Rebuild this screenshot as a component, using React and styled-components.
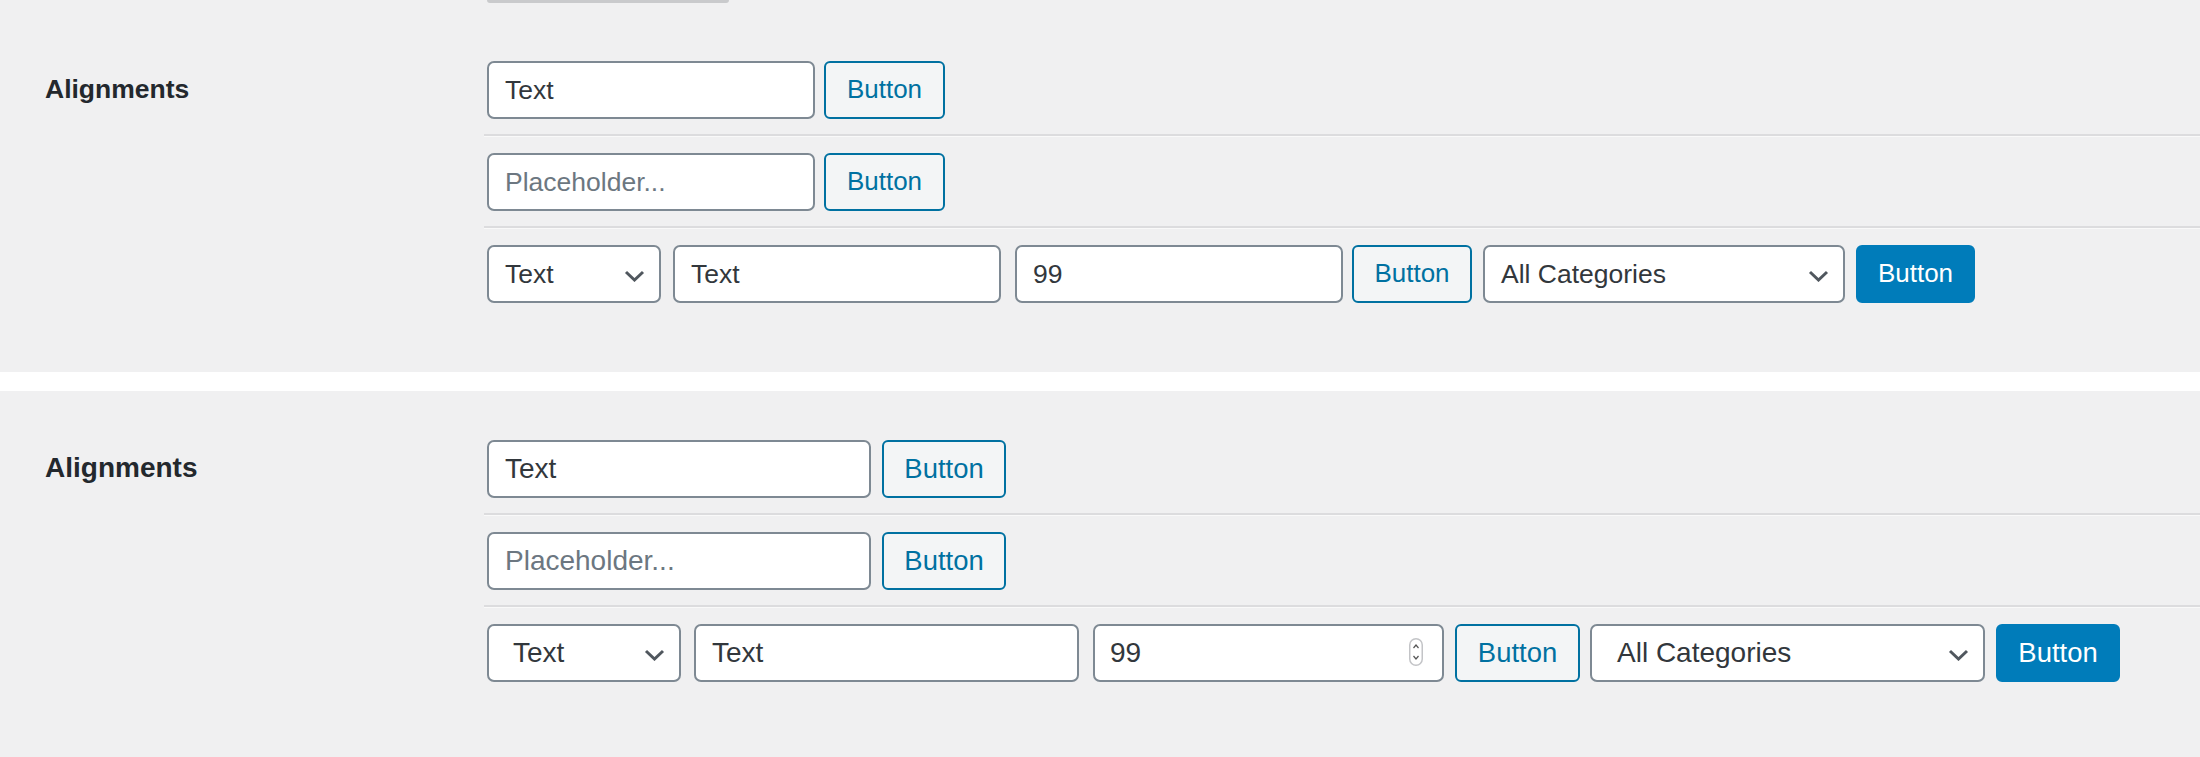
import React from 'react';
import styled, { createGlobalStyle } from 'styled-components';

const Global = createGlobalStyle`
  html, body { margin: 0; padding: 0; background: #fff; }
  body { font-family: "Liberation Sans", Arial, sans-serif; color: #32373c; }
  * { box-sizing: border-box; }
`;

const Page = styled.div`
  display: flex;
  flex-direction: column;
  gap: 19px;
  width: 2200px;
`;

const Section = styled.section`
  display: flex;
  background: #f0f0f1;
  padding: ${(p) => p.$pt}px 0 ${(p) => p.$pb}px;
  font-size: ${(p) => p.$fs}px;
`;

const LabelCol = styled.div`
  flex: none;
  width: 484px;
  padding-left: 45px;
  padding-top: ${(p) => p.$offset}px;
`;

const Label = styled.div`
  height: 58px;
  line-height: 56px;
  font-weight: 700;
  color: #23282d;
  font-size: 1em;
`;

const Content = styled.div`
  flex: 1;
  display: flex;
  flex-direction: column;
`;

const Stub = styled.div`
  width: 242px;
  height: 3px;
  margin-left: 3px;
  margin-bottom: 42px;
  background: #c9cacc;
  border-radius: 0 0 4px 4px;
`;

const Row = styled.div`
  display: flex;
  align-items: center;
  padding: 16px 0 15px;
  & + & {
    border-top: 2px solid #dcdcde;
    padding-top: 17px;
    box-shadow: inset 0 1px 0 #f9f9f9;
  }
`;

const Field = styled.div`
  flex: none;
  display: flex;
  align-items: center;
  justify-content: space-between;
  width: ${(p) => p.$w}px;
  height: 58px;
  margin-left: ${(p) => p.$ml}px;
  padding: 0 ${(p) => p.$pr ?? 14}px 0 ${(p) => p.$pl ?? 16}px;
  border: 2px solid #7e8993;
  border-radius: 7px;
  background: #fff;
  color: #32373c;
`;

const InputEl = styled.input`
  flex: 1;
  min-width: 0;
  border: 0;
  outline: 0;
  padding: 0;
  background: transparent;
  font: inherit;
  color: #32373c;
  &::placeholder {
    color: #6c7781;
    opacity: 1;
  }
`;

const SelectText = styled.span`
  white-space: nowrap;
`;

const Chevron = styled.svg`
  flex: none;
  width: 21px;
  height: 12px;
  margin-top: 4px;
`;

const Spinner = styled.svg`
  flex: none;
  width: 14px;
  height: 28px;
  margin-top: -2px;
`;

const Button = styled.button`
  flex: none;
  width: ${(p) => p.$w}px;
  height: 58px;
  margin-left: ${(p) => p.$ml}px;
  padding: 0;
  border: 2px solid ${(p) => (p.$primary ? '#007cba' : '#0071a1')};
  border-radius: 6px;
  background: ${(p) => (p.$primary ? '#007cba' : '#f3f5f6')};
  color: ${(p) => (p.$primary ? '#fff' : '#0071a1')};
  font-family: inherit;
  font-size: 0.98em;
  line-height: 1;
  cursor: pointer;
`;

const ChevronIcon = () => (
  <Chevron viewBox="0 0 21 12">
    <polyline points="2,2 10.5,10 19,2" fill="none" stroke="#50575e" strokeWidth="3" />
  </Chevron>
);

const SpinnerIcon = () => (
  <Spinner viewBox="0 0 14 28">
    <rect x="0.75" y="0.75" width="12.5" height="26.5" rx="6.25" fill="#fff" stroke="#c3c4c7" strokeWidth="1.5" />
    <polyline points="4.5,10 7,7 9.5,10" fill="none" stroke="#555" strokeWidth="1.2" />
    <polyline points="4.5,18 7,21 9.5,18" fill="none" stroke="#555" strokeWidth="1.2" />
  </Spinner>
);

const Control = ({ c }) => {
  if (c.type === 'input') {
    return (
      <Field $w={c.w} $ml={c.ml} $pl={c.pl} $pr={c.pr}>
        <InputEl type="text" defaultValue={c.value} placeholder={c.placeholder} readOnly />
        {c.spinner && <SpinnerIcon />}
      </Field>
    );
  }
  if (c.type === 'select') {
    return (
      <Field $w={c.w} $ml={c.ml} $pl={c.pl} $pr={14}>
        <SelectText>{c.value}</SelectText>
        <ChevronIcon />
      </Field>
    );
  }
  return (
    <Button $w={c.w} $ml={c.ml} $primary={c.primary}>
      Button
    </Button>
  );
};

const sections = [
  {
    fs: 26.5,
    pt: 0,
    pb: 54,
    labelOffset: 61,
    stub: true,
    rows: [
      [
        { type: 'input', w: 328, ml: 3, value: 'Text' },
        { type: 'button', w: 121, ml: 9 },
      ],
      [
        { type: 'input', w: 328, ml: 3, placeholder: 'Placeholder...' },
        { type: 'button', w: 121, ml: 9 },
      ],
      [
        { type: 'select', w: 174, ml: 3, value: 'Text', pl: 16 },
        { type: 'input', w: 328, ml: 12, value: 'Text' },
        { type: 'input', w: 328, ml: 14, value: '99' },
        { type: 'button', w: 120, ml: 9 },
        { type: 'select', w: 362, ml: 11, value: 'All Categories', pl: 16 },
        { type: 'button', w: 119, ml: 11, primary: true },
      ],
    ],
  },
  {
    fs: 28,
    pt: 33,
    pb: 60,
    labelOffset: 16,
    stub: false,
    rows: [
      [
        { type: 'input', w: 384, ml: 3, value: 'Text' },
        { type: 'button', w: 124, ml: 11 },
      ],
      [
        { type: 'input', w: 384, ml: 3, placeholder: 'Placeholder...' },
        { type: 'button', w: 124, ml: 11 },
      ],
      [
        { type: 'select', w: 194, ml: 3, value: 'Text', pl: 24 },
        { type: 'input', w: 385, ml: 13, value: 'Text' },
        { type: 'input', w: 351, ml: 14, value: '99', pl: 15, pr: 19, spinner: true },
        { type: 'button', w: 125, ml: 11 },
        { type: 'select', w: 395, ml: 10, value: 'All Categories', pl: 25 },
        { type: 'button', w: 124, ml: 11, primary: true },
      ],
    ],
  },
];

export default function App() {
  return (
    <>
      <Global />
      <Page>
        {sections.map((s, si) => (
          <Section key={si} $pt={s.pt} $pb={s.pb} $fs={s.fs}>
            <LabelCol $offset={s.labelOffset}>
              <Label>Alignments</Label>
            </LabelCol>
            <Content>
              {s.stub && <Stub />}
              {s.rows.map((r, ri) => (
                <Row key={ri}>
                  {r.map((c, ci) => (
                    <Control key={ci} c={c} />
                  ))}
                </Row>
              ))}
            </Content>
          </Section>
        ))}
      </Page>
    </>
  );
}
